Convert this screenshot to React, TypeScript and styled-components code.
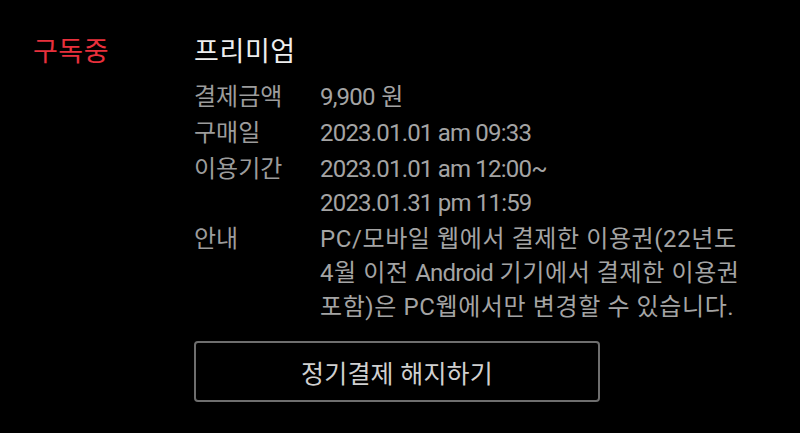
import React from "react";
import styled, { createGlobalStyle } from "styled-components";

const GlobalStyle = createGlobalStyle`
  html, body {
    margin: 0;
    padding: 0;
    background: #000;
  }
  body {
    font-family: Roboto, "Noto Sans CJK KR", sans-serif;
    -webkit-font-smoothing: antialiased;
  }
`;

const Page = styled.div`
  display: flex;
  min-height: 433px;
  padding: 35px 0 0 33px;
  box-sizing: border-box;
  background: #000;
`;

const Status = styled.div`
  width: 161px;
  flex-shrink: 0;
  color: #e8303c;
  font-size: 27px;
  line-height: 34px;
  letter-spacing: 0.5px;
`;

const Detail = styled.div`
  display: flex;
  flex-direction: column;
`;

const Title = styled.h2`
  margin: 0 0 11px;
  color: #eeeeee;
  font-size: 27px;
  font-weight: 400;
  line-height: 34px;
  letter-spacing: 0.6px;
`;

const InfoList = styled.dl`
  margin: 0;
  display: grid;
  grid-template-columns: 126px 470px;
  row-gap: 2px;
`;

const Label = styled.dt`
  color: #9c9c9c;
  font-size: 24px;
  line-height: 34px;
`;

const Value = styled.dd`
  margin: 0;
  color: #a4a4a4;
  font-size: 24px;
  line-height: 34px;
  letter-spacing: 0.6px;
`;

const Latin = styled.span`
  letter-spacing: -0.8px;
`;

const CancelButton = styled.button`
  margin-top: 17px;
  width: 406px;
  height: 61px;
  background: transparent;
  border: 2px solid #6e6e6e;
  border-radius: 4px;
  color: #d0d0d0;
  font-family: inherit;
  font-size: 25px;
  letter-spacing: 0.2px;
  cursor: pointer;
`;

const rows: { label: string; value: React.ReactNode }[] = [
  {
    label: "결제금액",
    value: (
      <>
        <Latin>9,900</Latin> 원
      </>
    ),
  },
  { label: "구매일", value: <Latin>2023.01.01 am 09:33</Latin> },
  {
    label: "이용기간",
    value: (
      <>
        <Latin>2023.01.01 am 12:00~</Latin>
        <br />
        <Latin>2023.01.31 pm 11:59</Latin>
      </>
    ),
  },
  {
    label: "안내",
    value: (
      <>
        PC/모바일 웹에서 결제한 이용권(22년도
        <br />
        4월 이전 <Latin>Android</Latin> 기기에서 결제한 이용권
        <br />
        포함)은 PC웹에서만 변경할 수 있습니다.
      </>
    ),
  },
];

export default function App() {
  return (
    <>
      <GlobalStyle />
      <Page>
        <Status>구독중</Status>
        <Detail>
          <Title>프리미엄</Title>
          <InfoList>
            {rows.map((r) => (
              <React.Fragment key={r.label}>
                <Label>{r.label}</Label>
                <Value>{r.value}</Value>
              </React.Fragment>
            ))}
          </InfoList>
          <CancelButton>정기결제 해지하기</CancelButton>
        </Detail>
      </Page>
    </>
  );
}
